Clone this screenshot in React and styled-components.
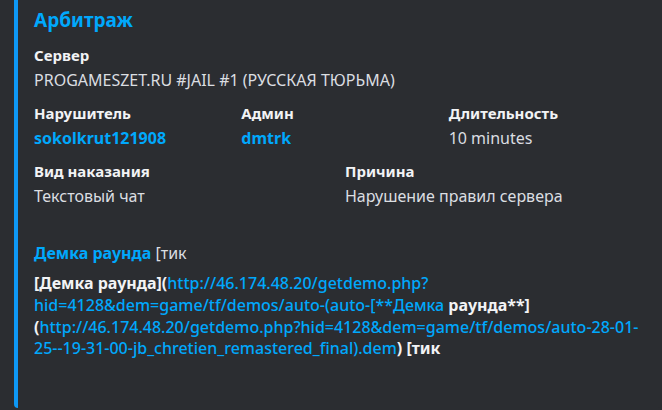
import React from "react";
import styled, { createGlobalStyle } from "styled-components";

const GlobalStyle = createGlobalStyle`
  html, body {
    margin: 0;
    padding: 0;
    background: #2b2d31;
  }
  body {
    font-family: "Noto Sans", "Open Sans", sans-serif;
    -webkit-font-smoothing: antialiased;
  }
`;

const Page = styled.div`
  width: 662px;
  height: 410px;
  overflow: hidden;
  background: #2b2d31;
`;

const Embed = styled.article`
  margin-left: 14px;
  width: 648px;
  height: 408px;
  box-sizing: border-box;
  background: #2b2d31;
  border-left: 4px solid #0e98f5;
  border-radius: 0 0 4px 4px;
  padding: 8px 14px 0 16px;
`;

const Title = styled.h2`
  margin: 0 0 14px;
  font-size: 19px;
  line-height: 24px;
  font-weight: 700;
  color: #00a8fc;
`;

const Fields = styled.div`
  display: grid;
  grid-template-columns: repeat(6, 1fr);
  column-gap: 8px;
  row-gap: 13px;
`;

const Field = styled.div`
  grid-column: span ${(p) => p.span};
  display: flex;
  flex-direction: column;
  gap: 5px;
  min-width: 0;
`;

const Label = styled.div`
  font-size: 15px;
  line-height: 18px;
  font-weight: 700;
  color: #f2f3f5;
`;

const Value = styled.div`
  font-size: 16px;
  line-height: 22px;
  font-weight: ${(p) => (p.$link ? 700 : 400)};
  color: ${(p) => (p.$link ? "#00a8fc" : "#dbdee1")};
  white-space: nowrap;
`;

const Description = styled.div`
  margin-top: 36px;
  font-size: 16px;
  line-height: 22px;
  color: #dbdee1;
`;

const Line = styled.div`
  white-space: nowrap;
  line-height: 21.7px;
`;

const Para = styled.div`
  margin-top: 8.5px;
`;

const Link = styled.span`
  color: #00a8fc;
  font-weight: ${(p) => (p.$bold ? 700 : 500)};
`;

const Strong = styled.span`
  color: #f2f3f5;
  font-weight: 700;
`;

const Muted = styled.span`
  color: #dbdee1;
`;

export default function App() {
  return (
    <Page>
      <GlobalStyle />
      <Embed>
        <Title>Арбитраж</Title>
        <Fields>
          <Field span={6}>
            <Label>Сервер</Label>
            <Value>PROGAMESZET.RU #JAIL #1 (РУССКАЯ ТЮРЬМА)</Value>
          </Field>
          <Field span={2}>
            <Label>Нарушитель</Label>
            <Value $link>sokolkrut121908</Value>
          </Field>
          <Field span={2}>
            <Label>Админ</Label>
            <Value $link>dmtrk</Value>
          </Field>
          <Field span={2}>
            <Label>Длительность</Label>
            <Value>10 minutes</Value>
          </Field>
          <Field span={3}>
            <Label>Вид наказания</Label>
            <Value>Текстовый чат</Value>
          </Field>
          <Field span={3}>
            <Label>Причина</Label>
            <Value>Нарушение правил сервера</Value>
          </Field>
        </Fields>
        <Description>
          <Line>
            <Link $bold>Демка раунда</Link> <Muted>[тик</Muted>
          </Line>
          <Para>
            <Line>
              <Strong>[Демка раунда](</Strong>
              <Link>http://46.174.48.20/getdemo.php?</Link>
            </Line>
            <Line>
              <Link>hid=4128&amp;dem=game/tf/demos/auto-(auto-[**Демка</Link>{" "}
              <Strong>раунда**]</Strong>
            </Line>
            <Line>
              <Strong>(</Strong>
              <Link>http://46.174.48.20/getdemo.php?hid=4128&amp;dem=game/tf/demos/auto-28-01-</Link>
            </Line>
            <Line>
              <Link>25--19-31-00-jb_chretien_remastered_final).dem</Link>
              <Strong>) [тик</Strong>
            </Line>
          </Para>
        </Description>
      </Embed>
    </Page>
  );
}
